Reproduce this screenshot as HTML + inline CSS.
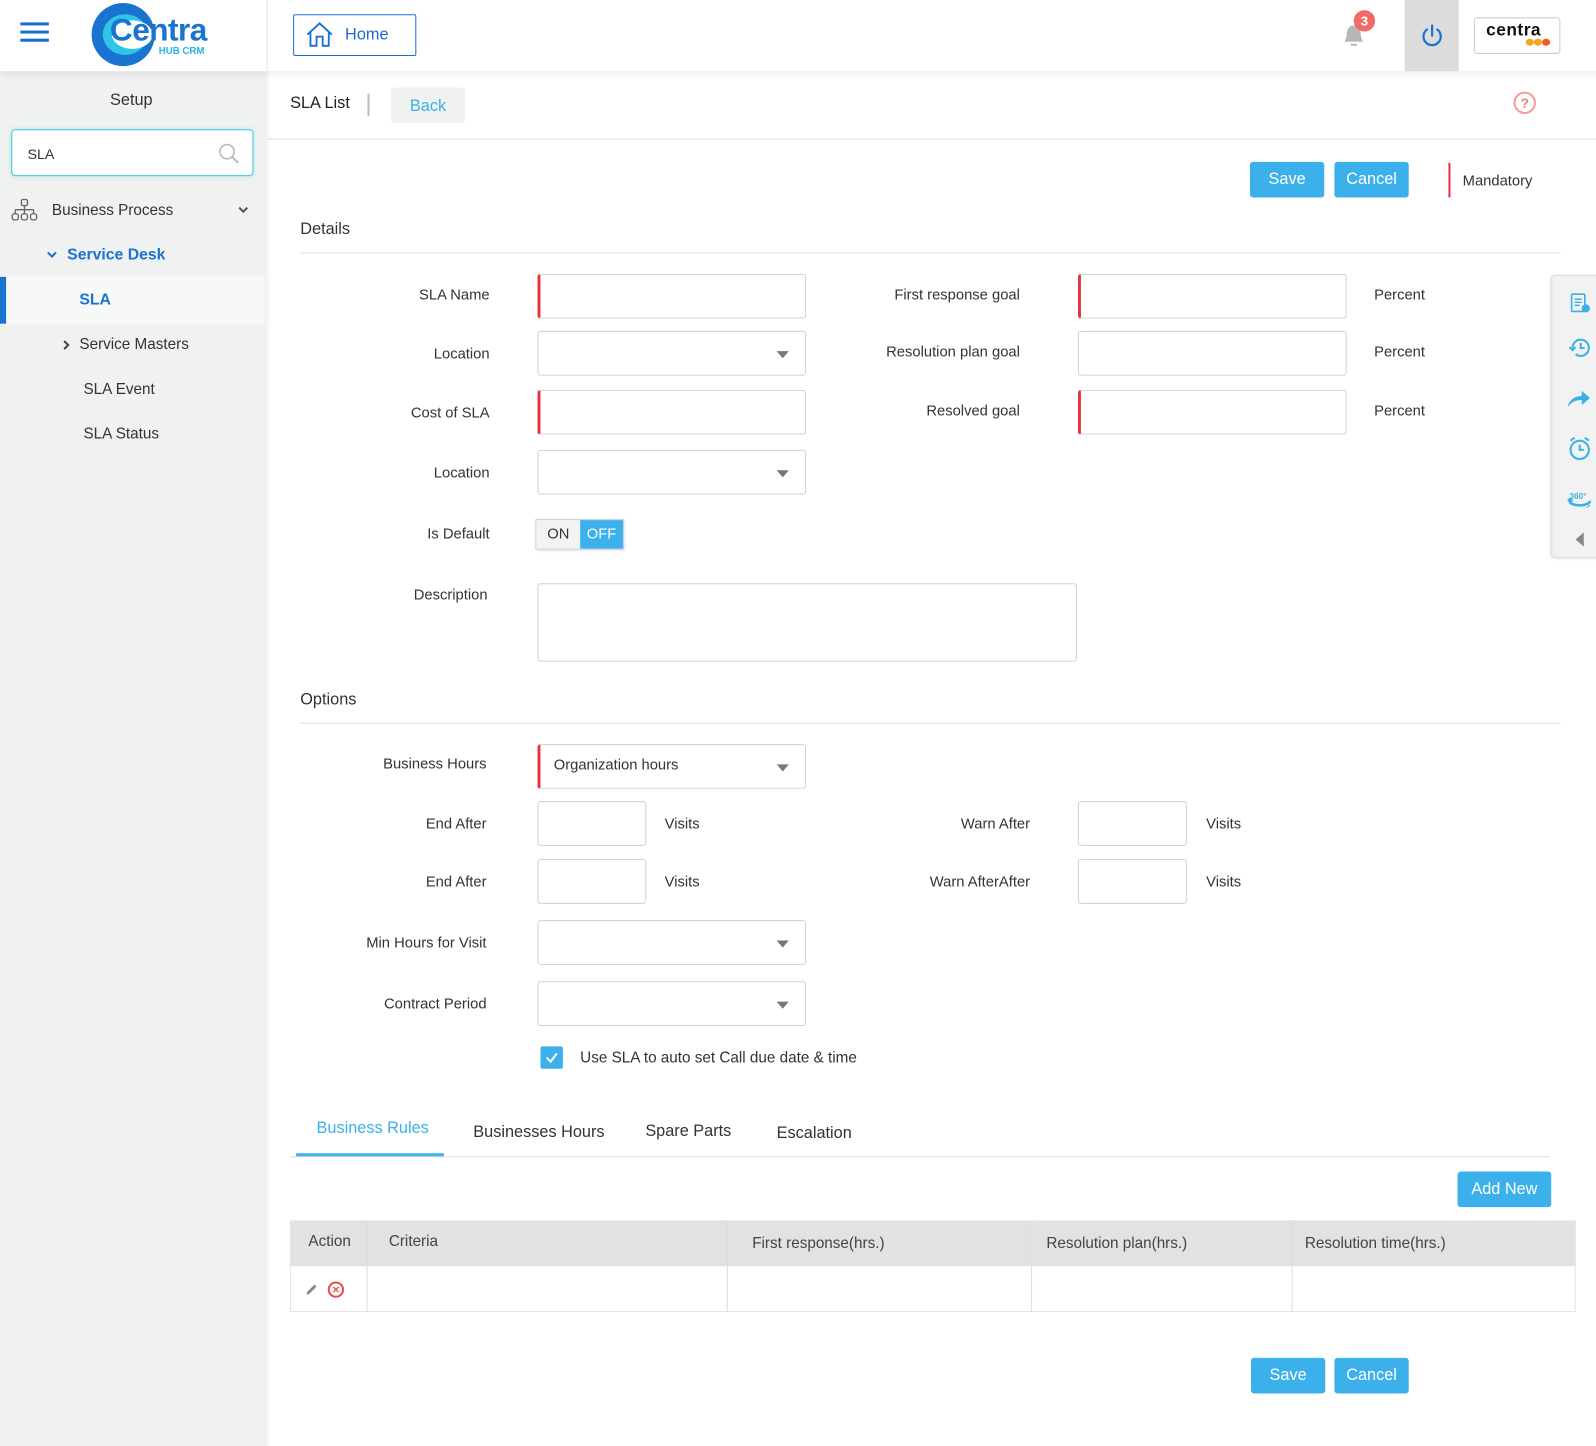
<!DOCTYPE html>
<html><head><meta charset="utf-8"><style>
*{margin:0;padding:0;box-sizing:border-box}
body{width:1596px;height:1421px;position:relative;overflow:hidden;background:#fff;font-family:"Liberation Sans",sans-serif;color:#333;font-size:14.5px}
#w{position:absolute;left:0;top:0;width:1568px;height:1396px;transform:scale(1.01786);transform-origin:0 0}
.a{position:absolute}
.lbl{position:absolute;text-align:right;width:200px;color:#333}
.inp{position:absolute;border:1px solid #cfcfd8;border-radius:3px;background:#fff;height:44px}
.req{border-left:3px solid #e3343f}
.caret{position:absolute;right:16px;top:19px;width:0;height:0;border-left:6px solid transparent;border-right:6px solid transparent;border-top:7px solid #777}
.btn{position:absolute;background:#3bb0ea;color:#fff;border-radius:3px;font-size:16px;text-align:center;line-height:35px;height:35px}
.side{color:#333;font-size:15px}
.th{position:absolute;top:1220px;color:#444;font-size:15px}
</style></head><body><div id="w">
<div class="a" style="left:0;top:0;width:262px;height:1421px;background:#f0f1f1;box-shadow:2px 0 4px rgba(0,0,0,.06)"></div>
<div class="a" style="left:0;top:0;width:1596px;height:70px;background:#fff;box-shadow:0 3px 6px rgba(0,0,0,.07)"></div>
<div class="a" style="left:262px;top:0;width:1px;height:70px;background:#e4e4e4"></div>
<div class="a" style="left:20px;top:22px;width:28px;height:3px;background:#1a6ed1"></div>
<div class="a" style="left:20px;top:30px;width:28px;height:3px;background:#1a6ed1"></div>
<div class="a" style="left:20px;top:38px;width:28px;height:3px;background:#1a6ed1"></div>
<div class="a" style="left:90px;top:3px;width:62px;height:62px;border-radius:50%;background:#1a73d0"></div>
<div class="a" style="left:101px;top:14px;width:44px;height:40px;border-radius:50%;background:#2ec5e6"></div>
<div class="a" style="left:110px;top:20px;width:40px;height:28px;border-radius:50%;background:#fff"></div>
<div class="a" style="left:108px;top:12px;font-size:31px;font-weight:bold;color:#1a73d0;letter-spacing:-0.5px">Centra</div>
<div class="a" style="left:156px;top:45px;font-size:9.5px;font-weight:bold;color:#2ab5e6">HUB CRM</div>
<div class="a" style="left:288px;top:14px;width:121px;height:41px;border:1px solid #1a6ed1;border-radius:2px"></div>
<svg class="a" style="left:300px;top:21px" width="28" height="26" viewBox="0 0 28 26"><path d="M2 13 L14 2 L26 13 M5 10 V24 H11 V15 H17 V24 H23 V10" fill="none" stroke="#1a6ed1" stroke-width="1.8"/></svg>
<div class="a" style="left:339px;top:26px;font-size:16px;color:#1a6ed1">Home</div>
<svg class="a" style="left:1318px;top:22px" width="24" height="26" viewBox="0 0 24 26"><path d="M12 3 C6 3 5 9 5 14 L3 19 H21 L19 14 C19 9 18 3 12 3Z M9 21 H15 V23 H9Z" fill="#b7b7b7"/></svg>
<div class="a" style="left:1330px;top:10px;width:21px;height:21px;border-radius:50%;background:#f06a6a;color:#fff;font-size:13px;font-weight:bold;text-align:center;line-height:21px">3</div>
<div class="a" style="left:1380px;top:0;width:53px;height:70px;background:#dcdcdc"></div>
<svg class="a" style="left:1395px;top:23px" width="24" height="24" viewBox="0 0 24 24"><path d="M7 6 A8.5 8.5 0 1 0 17 6" fill="none" stroke="#1a73d0" stroke-width="2.2" stroke-linecap="round"/><path d="M12 2 V12" stroke="#1a73d0" stroke-width="2.2" stroke-linecap="round"/></svg>
<div class="a" style="left:1448px;top:17px;width:85px;height:36px;border:1px solid #ccc;border-radius:3px;background:#fff"></div>
<div class="a" style="left:1460px;top:20px;font-size:17px;font-weight:bold;color:#111;letter-spacing:0.5px">centra</div>
<div class="a" style="left:1499px;top:38px;width:8px;height:7px;border-radius:50%;background:#f5a623"></div>
<div class="a" style="left:1507px;top:38px;width:8px;height:7px;border-radius:50%;background:#f5a623"></div>
<div class="a" style="left:1515px;top:38px;width:8px;height:7px;border-radius:50%;background:#ee5a24"></div>
<div class="a side" style="left:0;width:258px;top:90px;text-align:center;font-size:16px">Setup</div>
<div class="a" style="left:11px;top:127px;width:238px;height:46px;border:1px solid #3cc6e4;border-radius:4px;background:#fff;box-shadow:0 0 4px rgba(60,198,228,.3)"></div>
<div class="a" style="left:27px;top:143px;font-size:14px">SLA</div>
<svg class="a" style="left:214px;top:140px" width="22" height="22" viewBox="0 0 22 22"><circle cx="9" cy="9" r="7" fill="none" stroke="#bbb" stroke-width="1.6"/><path d="M14 14 L20 20" stroke="#bbb" stroke-width="2"/></svg>
<svg class="a" style="left:11px;top:195px" width="26" height="23" viewBox="0 0 26 23"><g fill="none" stroke="#666" stroke-width="1.3"><rect x="10" y="1" width="6" height="6" rx="1.5"/><path d="M13 7 V11 M4 11 H22 M4 11 V15 M13 11 V15 M22 11 V15"/><rect x="1" y="15" width="6" height="6" rx="2"/><rect x="10" y="15" width="6" height="6" rx="2"/><rect x="19" y="15" width="6" height="6" rx="2"/></g></svg>
<div class="a side" style="left:51px;top:198px">Business Process</div>
<svg class="a" style="left:233px;top:201px" width="12" height="10" viewBox="0 0 12 10"><path d="M2 3 L6 7 L10 3" fill="none" stroke="#555" stroke-width="2"/></svg>
<svg class="a" style="left:45px;top:245px" width="12" height="10" viewBox="0 0 12 10"><path d="M2 3 L6 7 L10 3" fill="none" stroke="#1a73d0" stroke-width="2"/></svg>
<div class="a" style="left:66px;top:242px;font-size:15.5px;font-weight:bold;color:#1a73d0">Service Desk</div>
<div class="a" style="left:0;top:272px;width:260px;height:46px;background:#f7f8f8"></div>
<div class="a" style="left:0;top:272px;width:6px;height:46px;background:#1a73d0"></div>
<div class="a" style="left:78px;top:286px;font-size:15.5px;font-weight:bold;color:#1a73d0">SLA</div>
<svg class="a" style="left:60px;top:333px" width="10" height="12" viewBox="0 0 10 12"><path d="M3 2 L7 6 L3 10" fill="none" stroke="#444" stroke-width="2"/></svg>
<div class="a side" style="left:78px;top:330px">Service Masters</div>
<div class="a side" style="left:82px;top:374px">SLA Event</div>
<div class="a side" style="left:82px;top:418px">SLA Status</div>
<div class="a" style="left:285px;top:93px;font-size:16px;color:#222">SLA List</div>
<div class="a" style="left:361px;top:92px;width:2px;height:22px;background:#bbb"></div>
<div class="a" style="left:384px;top:86px;width:73px;height:35px;background:#f0f1f1;border-radius:3px;color:#3ab0e8;font-size:16px;text-align:center;line-height:37px">Back</div>
<div class="a" style="left:1487px;top:90px;width:22px;height:22px;border:2px solid #f49a9a;border-radius:50%;color:#f08080;font-size:14px;font-weight:bold;text-align:center;line-height:18px">?</div>
<div class="a" style="left:262px;top:136px;width:1334px;height:1px;background:#ddd"></div>
<div class="btn" style="left:1228px;top:159px;width:73px">Save</div>
<div class="btn" style="left:1311px;top:159px;width:73px">Cancel</div>
<div class="a" style="left:1423px;top:160px;width:2px;height:34px;background:#e3343f"></div>
<div class="a" style="left:1437px;top:170px;font-size:14.5px">Mandatory</div>
<div class="a" style="left:295px;top:217px;font-size:16px">Details</div>
<div class="a" style="left:295px;top:248px;width:1238px;height:1px;background:#ddd"></div>
<div class="lbl" style="left:281px;top:282px">SLA Name</div>
<div class="inp req" style="left:528px;top:269px;width:264px"></div>
<div class="lbl" style="left:281px;top:340px">Location</div>
<div class="inp" style="left:528px;top:325px;width:264px"><span class="caret"></span></div>
<div class="lbl" style="left:281px;top:398px">Cost of SLA</div>
<div class="inp req" style="left:528px;top:383px;width:264px"></div>
<div class="lbl" style="left:281px;top:457px">Location</div>
<div class="inp" style="left:528px;top:442px;width:264px"><span class="caret"></span></div>
<div class="lbl" style="left:802px;top:282px">First response goal</div>
<div class="inp req" style="left:1059px;top:269px;width:264px"></div>
<div class="a" style="left:1350px;top:282px">Percent</div>
<div class="lbl" style="left:802px;top:338px">Resolution plan goal</div>
<div class="inp" style="left:1059px;top:325px;width:264px"></div>
<div class="a" style="left:1350px;top:338px">Percent</div>
<div class="lbl" style="left:802px;top:396px">Resolved goal</div>
<div class="inp req" style="left:1059px;top:383px;width:264px"></div>
<div class="a" style="left:1350px;top:396px">Percent</div>
<div class="lbl" style="left:281px;top:517px">Is Default</div>
<div class="a" style="left:526px;top:510px;width:87px;height:30px;border:1px solid #ccd;box-shadow:1px 1px 3px rgba(0,0,0,.15)"></div>
<div class="a" style="left:527px;top:511px;width:43px;height:28px;background:#f3f3f3;text-align:center;line-height:28px">ON</div>
<div class="a" style="left:570px;top:511px;width:42px;height:28px;background:#3bb0ea;color:#fff;text-align:center;line-height:28px">OFF</div>
<div class="lbl" style="left:279px;top:577px">Description</div>
<div class="a" style="left:528px;top:573px;width:530px;height:77px;border:1px solid #cfcfd8;border-radius:3px"></div>
<div class="a" style="left:295px;top:679px;font-size:16px">Options</div>
<div class="a" style="left:295px;top:710px;width:1238px;height:1px;background:#ddd"></div>
<div class="lbl" style="left:278px;top:743px">Business Hours</div>
<div class="inp req" style="left:528px;top:731px;width:264px"><span class="a" style="left:13px;top:12px">Organization hours</span><span class="caret"></span></div>
<div class="lbl" style="left:278px;top:802px">End After</div>
<div class="inp" style="left:528px;top:787px;width:107px"></div>
<div class="a" style="left:653px;top:802px">Visits</div>
<div class="lbl" style="left:812px;top:802px">Warn After</div>
<div class="inp" style="left:1059px;top:787px;width:107px"></div>
<div class="a" style="left:1185px;top:802px">Visits</div>
<div class="lbl" style="left:278px;top:859px">End After</div>
<div class="inp" style="left:528px;top:844px;width:107px"></div>
<div class="a" style="left:653px;top:859px">Visits</div>
<div class="lbl" style="left:812px;top:859px">Warn AfterAfter</div>
<div class="inp" style="left:1059px;top:844px;width:107px"></div>
<div class="a" style="left:1185px;top:859px">Visits</div>
<div class="lbl" style="left:278px;top:919px">Min Hours for Visit</div>
<div class="inp" style="left:528px;top:904px;width:264px"><span class="caret"></span></div>
<div class="lbl" style="left:278px;top:979px">Contract Period</div>
<div class="inp" style="left:528px;top:964px;width:264px"><span class="caret"></span></div>
<div class="a" style="left:531px;top:1028px;width:22px;height:22px;background:#3bb0ea;border-radius:2px"></div>
<svg class="a" style="left:531px;top:1028px" width="22" height="22" viewBox="0 0 22 22"><path d="M6 11 L10 15 L16 7" fill="none" stroke="#fff" stroke-width="2"/></svg>
<div class="a" style="left:570px;top:1031px;font-size:15px">Use SLA to auto set Call due date &amp; time</div>
<div class="a" style="left:311px;top:1100px;font-size:16px;color:#3ab0e8">Business Rules</div>
<div class="a" style="left:465px;top:1104px;font-size:16px">Businesses Hours</div>
<div class="a" style="left:634px;top:1103px;font-size:16px">Spare Parts</div>
<div class="a" style="left:763px;top:1105px;font-size:16px">Escalation</div>
<div class="a" style="left:285px;top:1136px;width:1237px;height:1px;background:#ddd"></div>
<div class="a" style="left:291px;top:1133px;width:145px;height:3px;background:#3bb0ea"></div>
<div class="btn" style="left:1432px;top:1151px;width:92px">Add New</div>
<div class="a" style="left:285px;top:1199px;width:1263px;height:90px;border:1px solid #e3e3e3"></div>
<div class="a" style="left:285px;top:1199px;width:1263px;height:45px;background:#e3e1e2"></div>
<div class="a" style="left:360px;top:1199px;width:1px;height:90px;background:#ddd"></div>
<div class="a" style="left:714px;top:1199px;width:1px;height:90px;background:#ddd"></div>
<div class="a" style="left:1013px;top:1199px;width:1px;height:90px;background:#ddd"></div>
<div class="a" style="left:1269px;top:1199px;width:1px;height:90px;background:#ddd"></div>
<div class="th" style="left:303px;top:1211px">Action</div>
<div class="th" style="left:382px;top:1211px">Criteria</div>
<div class="th" style="left:739px;top:1213px">First response(hrs.)</div>
<div class="th" style="left:1028px;top:1213px">Resolution plan(hrs.)</div>
<div class="th" style="left:1282px;top:1213px">Resolution time(hrs.)</div>
<svg class="a" style="left:299px;top:1260px" width="14" height="14" viewBox="0 0 14 14"><path d="M2 12 L3 9 L10 2 L12 4 L5 11 Z" fill="#888"/></svg>
<div class="a" style="left:322px;top:1259px;width:16px;height:16px;border:2px solid #e94b4b;border-radius:50%;color:#e94b4b;font-size:12px;font-weight:bold;text-align:center;line-height:12px">×</div>
<div class="btn" style="left:1229px;top:1334px;width:73px">Save</div>
<div class="btn" style="left:1311px;top:1334px;width:73px">Cancel</div>
<div class="a" style="left:1524px;top:270px;width:80px;height:278px;background:#f2f2f2;border:1px solid #ddd;border-radius:4px;box-shadow:-1px 1px 3px rgba(0,0,0,.1)"></div>
<svg class="a" style="left:1540px;top:286px" width="24" height="24" viewBox="0 0 24 24"><rect x="4" y="3" width="13" height="17" rx="1" fill="none" stroke="#3ab0e8" stroke-width="1.6"/><path d="M7 8H14M7 11H14M7 14H12" stroke="#3ab0e8" stroke-width="1.4"/><circle cx="18" cy="17" r="4" fill="#3ab0e8"/></svg>
<svg class="a" style="left:1540px;top:330px" width="24" height="24" viewBox="0 0 24 24"><path d="M5 12 A8 8 0 1 1 8 18" fill="none" stroke="#3ab0e8" stroke-width="2"/><path d="M2 11 L5 14 L8 11" fill="none" stroke="#3ab0e8" stroke-width="2"/><path d="M13 7 V12 H17" fill="none" stroke="#3ab0e8" stroke-width="2"/></svg>
<svg class="a" style="left:1538px;top:380px" width="26" height="24" viewBox="0 0 26 24"><path d="M2 20 C4 12 10 9 16 9 V4 L24 11 L16 18 V13 C10 13 6 15 2 20Z" fill="#3ab0e8"/></svg>
<svg class="a" style="left:1540px;top:428px" width="24" height="26" viewBox="0 0 24 26"><circle cx="12" cy="14" r="9" fill="none" stroke="#3ab0e8" stroke-width="2"/><path d="M12 9 V14 H16 M3 5 L7 2 M21 5 L17 2" fill="none" stroke="#3ab0e8" stroke-width="2"/></svg>
<div class="a" style="left:1542px;top:483px;font-size:8px;font-weight:bold;color:#3ab0e8">360°</div>
<svg class="a" style="left:1539px;top:486px" width="26" height="16" viewBox="0 0 26 16"><path d="M3 6 C3 12 23 12 23 6" fill="none" stroke="#3ab0e8" stroke-width="2.5"/><path d="M1 6 L4 3 L6 7 M20 13 L23 10" fill="#3ab0e8" stroke="#3ab0e8"/></svg>
<div class="a" style="left:1548px;top:523px;width:0;height:0;border-top:7px solid transparent;border-bottom:7px solid transparent;border-right:8px solid #888"></div>
</div></body></html>
